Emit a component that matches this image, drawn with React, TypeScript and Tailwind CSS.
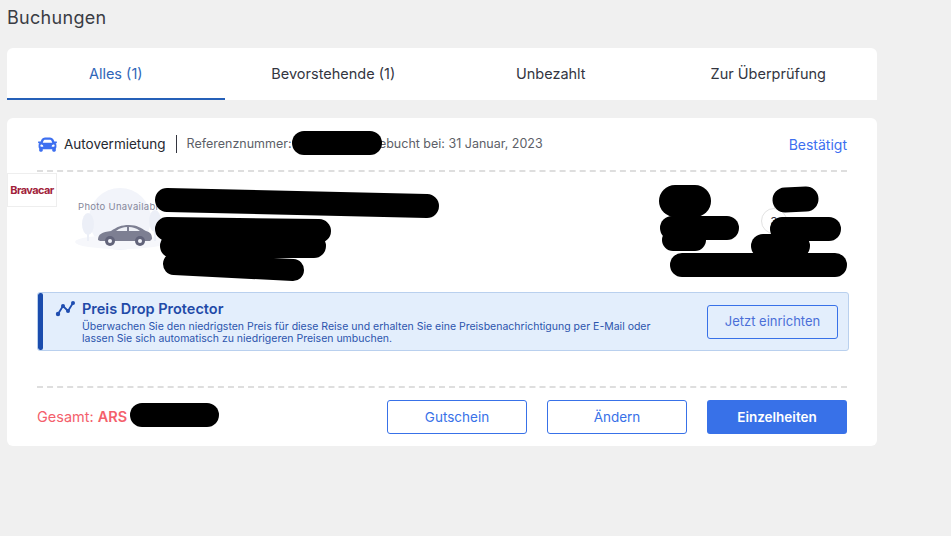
import { FaCar } from "react-icons/fa";

const strokes: [number, number, number, number, number][] = [
  [304, 143, 370, 143, 24],
  [167, 200, 427, 206, 24],
  [167, 229, 319, 231, 24],
  [172, 246, 314, 246, 24],
  [174, 264, 293, 270, 22],
  [675, 201, 695, 201, 32],
  [672, 228, 727, 228, 24],
  [673, 240, 695, 240, 22],
  [785, 200, 806, 199, 25],
  [782, 229, 829, 229, 24],
  [763, 246, 798, 246, 24],
  [682, 265, 835, 265, 24],
  [142, 415, 207, 415, 24],
];

function Tab({ label, active }: { label: string; active?: boolean }) {
  return (
    <div
      className={
        active
          ? "flex-1 flex items-center justify-center border-b-2 border-[#2560b8] text-[#2f66b8] pt-[2px]"
          : "flex-1 flex items-center justify-center border-b-2 border-transparent text-[#33353f] pt-[2px]"
      }
    >
      {label}
    </div>
  );
}

function OutlineButton({ label }: { label: string }) {
  return (
    <button className="w-[140px] h-[34px] rounded-[3px] border border-[#3871e8] bg-white text-[#3871e8] text-[13.5px]">
      {label}
    </button>
  );
}

function Photo() {
  return (
    <div className="flex flex-col items-center w-[94px] ml-[17px] mt-[9px] relative">
      <svg width="94" height="70" viewBox="0 0 94 70" className="block">
        <circle cx="46" cy="38" r="31" fill="#f2f4fa" />
        <ellipse cx="47" cy="61" rx="46" ry="7" fill="#f6f7fb" />
        <ellipse cx="14" cy="43" rx="6" ry="11" fill="#eceff7" />
        <rect x="13" y="50" width="2" height="10" fill="#eceff7" />
        <ellipse cx="81" cy="40" rx="6" ry="11" fill="#eceff7" />
        <rect x="80" y="48" width="2" height="12" fill="#eceff7" />
        <path d="M24 59 C24 53 28 51 37 50 C43 46 47 44 55 44 C63 44 67 47 72 50 C76 51 78 53 78 58 L76 60 L26 60 Z" fill="#7d7f92" />
        <path d="M42 50 C46 47 49 46 53 46 L53 50 Z M55 46 C59 46 62 47 66 50 L55 50 Z" fill="#eef0f6" />
        <circle cx="36" cy="60" r="5" fill="#62647a" />
        <circle cx="36" cy="60" r="2" fill="#f2f4fa" />
        <circle cx="66" cy="60" r="5" fill="#62647a" />
        <circle cx="66" cy="60" r="2" fill="#f2f4fa" />
      </svg>
      <span className="absolute top-[20px] left-0 right-0 text-center text-[9.5px] leading-3 tracking-[0.3px] text-[#85879a] whitespace-nowrap">
        Photo Unavailable
      </span>
    </div>
  );
}

export default function App() {
  return (
    <div
      className="relative w-[951px] h-[536px] overflow-hidden bg-[#f0f0f0] pl-[7px] text-[14px] text-[#33353f]"
      style={{ fontFamily: "Inter, 'Liberation Sans', sans-serif" }}
    >
      <h1 className="h-[48px] pt-[6px] text-[18px] leading-6 tracking-[0.3px] text-[#3a3c44]">Buchungen</h1>

      <div className="w-[870px] h-[52px] flex rounded-t-[6px] bg-white text-[14.5px] overflow-hidden">
        <Tab label="Alles (1)" active />
        <Tab label="Bevorstehende (1)" />
        <Tab label="Unbezahlt" />
        <Tab label="Zur Überprüfung" />
      </div>

      <div className="w-[870px] h-[328px] mt-[18px] px-[30px] rounded-[6px] bg-white">
        <div className="h-[54px] flex items-center border-b-2 border-dashed border-[#dedede]">
          <FaCar className="text-[#3d6ff0] w-[21px] h-[19px] mr-[6px]" />
          <span className="text-[13.5px] text-[#262830]">Autovermietung</span>
          <span className="w-px h-[18px] bg-[#33353f] mx-[10px]" />
          <span className="text-[12.5px] text-[#5d5f68]">Referenznummer:</span>
          <span className="ml-[78px] text-[12.5px] text-[#5d5f68]">Gebucht bei: 31 Januar, 2023</span>
          <span className="ml-auto text-[14px] text-[#3d6ff0]">Bestätigt</span>
        </div>

        <div className="h-[120px] flex -ml-[30px]">
          <div className="flex items-start">
            <div className="w-[50px] h-[34px] mt-px border border-[#eeeeee] bg-white flex items-center justify-center overflow-hidden text-[11px] font-bold tracking-[-0.6px] text-[#a21f3c]">
              Bravacar
            </div>
            <Photo />
          </div>
          <div className="ml-[593px] w-[26px] flex flex-col items-center mt-[22px]">
            <span className="w-px h-[14px] bg-[#e2e2e2]" />
            <span className="w-[26px] h-[26px] shrink-0 rounded-full border border-[#e2e2e2] bg-white flex items-center justify-center text-[11px] text-[#33353f]">
              3
            </span>
          </div>
        </div>

        <div className="w-[812px] h-[59px] flex items-center rounded-[3px] border border-[#b9d0ee] bg-[#e3eefc] overflow-hidden">
          <span className="w-[5px] self-stretch bg-[#1a4cad] rounded-[2px] shrink-0" />
          <div className="ml-[12px] flex-1 min-w-0">
            <div className="flex items-center">
              <svg width="22" height="18" viewBox="0 0 22 18" className="mr-[5px] text-[#1f4db0]" fill="currentColor">
                <path d="M3 14 L8 6 L13 11 L18 3" fill="none" stroke="currentColor" strokeWidth="1.8" />
                <circle cx="3" cy="14" r="2.2" />
                <circle cx="8" cy="6" r="2" />
                <circle cx="13" cy="11" r="2" />
                <circle cx="18" cy="3" r="2" />
              </svg>
              <span className="text-[14.5px] leading-5 font-semibold text-[#1f4aa8]">Preis Drop Protector</span>
            </div>
            <p className="mt-[2px] ml-[27px] text-[10.5px] leading-3 text-[#2b54ad]">
              Überwachen Sie den niedrigsten Preis für diese Reise und erhalten Sie eine Preisbenachrichtigung per E-Mail oder
              <br />
              lassen Sie sich automatisch zu niedrigeren Preisen umbuchen.
            </p>
          </div>
          <button className="w-[131px] h-[34px] mr-[10px] shrink-0 rounded-[3px] border border-[#3871e8] text-[13px] text-[#4a6fd8]">
            Jetzt einrichten
          </button>
        </div>

        <div className="mt-[35px] border-t-2 border-dashed border-[#dedede] pt-[12px] flex items-center gap-[20px]">
          <div className="mr-auto text-[14.5px] text-[#f4606c]">
            Gesamt: <b className="font-semibold">ARS</b>
          </div>
          <OutlineButton label="Gutschein" />
          <OutlineButton label="Ändern" />
          <button className="w-[140px] h-[34px] rounded-[3px] bg-[#3871e8] text-white text-[13.5px] font-semibold">
            Einzelheiten
          </button>
        </div>
      </div>

      <svg className="absolute inset-0 pointer-events-none" width="951" height="536" viewBox="0 0 951 536">
        {strokes.map(([x1, y1, x2, y2, w], i) => (
          <line key={i} x1={x1} y1={y1} x2={x2} y2={y2} stroke="#000" strokeWidth={w} strokeLinecap="round" />
        ))}
      </svg>
    </div>
  );
}
